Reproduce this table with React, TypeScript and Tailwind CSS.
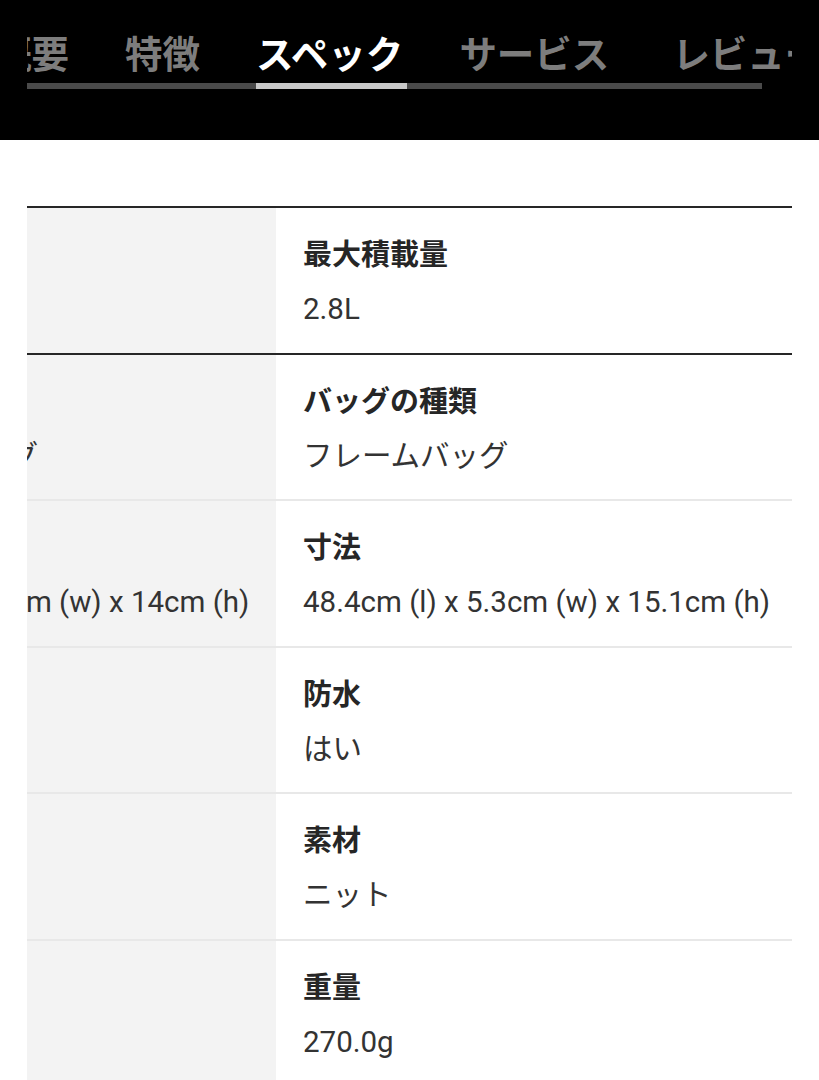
import React from "react";

const FONT = { fontFamily: 'Roboto, "Noto Sans CJK JP", sans-serif' };

type Row = { label: string; left: string; right: string };

const rows: Row[] = [
  { label: "最大積載量", left: "1.5L", right: "2.8L" },
  { label: "バッグの種類", left: "XL ハンドルバッグ", right: "フレームバッグ" },
  { label: "寸法", left: "48.4cm (l) x 10.3cm (w) x 14cm (h)", right: "48.4cm (l) x 5.3cm (w) x 15.1cm (h)" },
  { label: "防水", left: "はい", right: "はい" },
  { label: "素材", left: "ナイロン", right: "ニット" },
  { label: "重量", left: "180.0g", right: "270.0g" },
];

const tabs = ["概要", "特徴", "スペック", "サービス", "レビュー"];

function Cell({ label, value, gray }: { label: string; value: string; gray?: boolean }) {
  return (
    <div
      className={
        "w-[516px] shrink-0 pt-[27px] " +
        (gray ? "bg-[#f3f3f3] pl-[30px]" : "bg-white pl-[27px]")
      }
    >
      <div className="text-[29px] leading-[40px] font-bold text-[#262626] whitespace-nowrap">{label}</div>
      <div className="mt-[14px] text-[29.5px] leading-[40px] text-[#333333] whitespace-nowrap">{value}</div>
    </div>
  );
}

export default function App() {
  return (
    <div className="w-[819px] h-[1080px] bg-white overflow-hidden" style={FONT}>
      {/* sticky tab header */}
      <div className="h-[140px] bg-black px-[27px] pt-[33px]">
        <div className="overflow-hidden w-[765px]">
          <div className="flex gap-[56px] -ml-[33px] text-[37.5px] leading-[44px] font-bold whitespace-nowrap">
            {tabs.map((t, i) => (
              <span
                key={t}
                className={
                  (t === "スペック" ? "text-white" : "text-[#7d7d7d]") +
                  (i === tabs.length - 1 ? " ml-[7px]" : "")
                }
              >
                {t}
              </span>
            ))}
          </div>
        </div>
        <div className="mt-[6px] w-[735px] h-[6px] bg-[#4a4a4a]">
          <div className="ml-[229px] w-[151px] h-full bg-[#c9c9c9]" />
        </div>
      </div>

      {/* spec table, scrolled horizontally */}
      <div className="px-[27px] pt-[66px]">
        <div className="overflow-hidden w-[765px]">
          <div className="-ml-[267px]">
            {rows.map((r, i) => (
              <div
                key={r.label}
                className={
                  "flex h-[146.5px] border-t-2 " +
                  (i < 2 ? "border-[#262626]" : "border-[#e8e8e8]")
                }
              >
                <Cell label={r.label} value={r.left} gray />
                <Cell label={r.label} value={r.right} />
              </div>
            ))}
          </div>
        </div>
      </div>
    </div>
  );
}
